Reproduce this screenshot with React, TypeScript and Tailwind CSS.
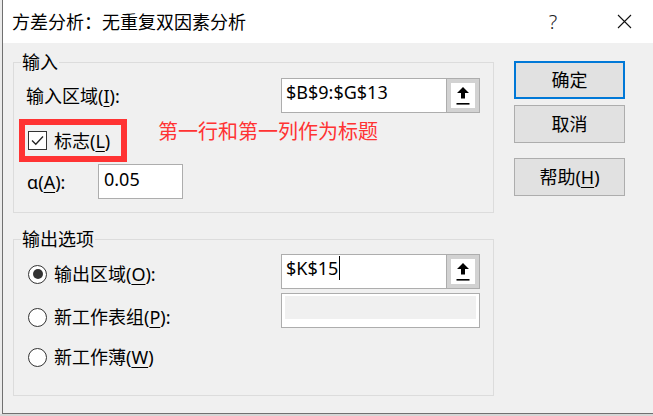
import type { ReactNode } from 'react';

// Excel "方差分析：无重复双因素分析" dialog, 150% Windows scaling look

function Key({ children }: { children: ReactNode }) {
  return <span className="underline decoration-1 underline-offset-[3px]">{children}</span>;
}

function UpArrow() {
  return (
    <svg width="14" height="20" viewBox="0 0 14 20" aria-hidden>
      <polygon points="7,1 13,7 9,7 9,12.5 5,12.5 5,7 1,7" fill="#000" />
      <rect x="0.5" y="17" width="13" height="1.6" fill="#000" />
    </svg>
  );
}

function RefInput({ value, caret }: { value: string; caret?: boolean }) {
  return (
    <div className="flex h-[35px] w-[199px]">
      <div className="flex flex-1 items-start border border-[#adadad] bg-white pl-[4px]">
        <span className="leading-[26px]">{value}</span>
        {caret && <span className="ml-[1px] mt-[1px] h-[24px] w-px bg-black" />}
      </div>
      <div className="w-[33px] border-y border-r border-[#adadad] bg-[#d2d2d2] p-[4px]">
        <div className="flex h-full items-center justify-center bg-white">
          <UpArrow />
        </div>
      </div>
    </div>
  );
}

function Checkbox() {
  return (
    <div className="h-[19px] w-[19px] shrink-0 border border-[#333] bg-white">
      <svg width="17" height="17" viewBox="0 0 17 17" aria-hidden>
        <polyline points="3,8.5 6.8,12.3 14,4.5" fill="none" stroke="#222" strokeWidth="1.3" />
      </svg>
    </div>
  );
}

function Radio({ checked }: { checked?: boolean }) {
  return (
    <div className="flex h-[19px] w-[19px] shrink-0 items-center justify-center rounded-full border border-[#333] bg-white">
      {checked && <div className="h-[10px] w-[10px] rounded-full bg-[#333]" />}
    </div>
  );
}

function DlgButton({ children, primary }: { children: ReactNode; primary?: boolean }) {
  return (
    <button
      className={
        primary
          ? 'flex h-[38px] w-[111px] items-center justify-center border-2 border-[#0078d7] bg-[#e1e1e1] leading-[24px]'
          : 'flex h-[38px] w-[111px] items-center justify-center border border-[#adadad] bg-[#e1e1e1] leading-[24px]'
      }
    >
      {children}
    </button>
  );
}

export default function App() {
  return (
    <div className="flex h-[416px] w-[653px] flex-col overflow-hidden bg-[#d6d6d6] font-['Noto_Sans','Noto_Sans_CJK_SC',sans-serif] text-[18px] text-black">
      <div className="flex h-[414px] shrink-0">
        <div className="w-[2px] shrink-0 bg-[#ebebeb]" />
        <div className="flex flex-1 flex-col border-b border-l border-[#707070] bg-[#f0f0f0]">
          {/* Title bar */}
          <div className="flex h-[43px] shrink-0 items-center bg-white pl-[9px]">
            <span className="leading-[24px]">方差分析：无重复双因素分析</span>
            <div className="ml-auto mr-[13px] flex w-[58px] justify-center text-[20px] font-light leading-[24px] text-[#222]">
              ?
            </div>
            <div className="flex w-[58px] justify-center">
              <svg width="15" height="15" viewBox="0 0 15 15" aria-hidden>
                <path d="M1 1L14 14M14 1L1 14" stroke="#111" strokeWidth="1.1" />
              </svg>
            </div>
          </div>

          {/* Body */}
          <div className="flex flex-1 pl-[10px] pt-[7px]">
            <div className="flex w-[481px] flex-col">
              {/* 输入 */}
              <fieldset className="border border-[#dcdcdc] pb-[13px]">
                <legend className="ml-[7px] px-[1px] leading-[24px]">输入</legend>
                <div className="mt-[4px] flex h-[35px] items-center">
                  <span className="ml-[12px] leading-[24px]">
                    输入区域(<Key>I</Key>):
                  </span>
                  <div className="ml-auto mr-[13px]">
                    <RefInput value="$B$9:$G$13" />
                  </div>
                </div>
                <div className="mt-[6px] flex items-start">
                  <div className="ml-[5px] flex h-[43px] w-[108px] items-center gap-[7px] border-[6px] border-[#ff3333] pl-[3px]">
                    <Checkbox />
                    <span className="leading-[24px]">
                      标志(<Key>L</Key>)
                    </span>
                  </div>
                  <span className="ml-[31px] mt-[1px] text-[20px] leading-[24px] text-[#ff3333]">
                    第一行和第一列作为标题
                  </span>
                </div>
                <div className="mt-[2px] flex h-[35px] items-center">
                  <span className="ml-[13px] w-[71px] leading-[24px]">
                    α(<Key>A</Key>):
                  </span>
                  <div className="h-[35px] w-[85px] border border-[#adadad] bg-white pl-[5px] pt-[1px]">
                    <span className="leading-[26px]">0.05</span>
                  </div>
                </div>
              </fieldset>

              {/* 输出选项 */}
              <fieldset className="mt-[14px] border border-[#dcdcdc] pb-[24px]">
                <legend className="ml-[7px] px-[1px] leading-[24px]">输出选项</legend>
                <div className="flex items-start">
                  <div className="flex flex-col pl-[14px] pt-[9px]">
                    <div className="flex h-[28px] items-center gap-[7px]">
                      <Radio checked />
                      <span className="leading-[24px]">
                        输出区域(<Key>O</Key>):
                      </span>
                    </div>
                    <div className="mt-[15px] flex h-[28px] items-center gap-[7px]">
                      <Radio />
                      <span className="leading-[24px]">
                        新工作表组(<Key>P</Key>):
                      </span>
                    </div>
                    <div className="mt-[12px] flex h-[28px] items-center gap-[7px]">
                      <Radio />
                      <span className="leading-[24px]">
                        新工作薄(<Key>W</Key>)
                      </span>
                    </div>
                  </div>
                  <div className="ml-auto mr-[13px] flex flex-col gap-[4px] pt-[3px]">
                    <RefInput value="$K$15" caret />
                    <div className="h-[35px] w-[199px] border border-[#adadad] bg-white px-[3px] pt-[2px]">
                      <div className="h-[23px] bg-[#f0f0f0]" />
                    </div>
                  </div>
                </div>
              </fieldset>
            </div>

            {/* Buttons */}
            <div className="ml-[20px] flex flex-col pt-[11px]">
              <DlgButton primary>确定</DlgButton>
              <div className="mt-[6px]">
                <DlgButton>取消</DlgButton>
              </div>
              <div className="mt-[15px]">
                <DlgButton>
                  帮助(<Key>H</Key>)
                </DlgButton>
              </div>
            </div>
          </div>
        </div>
      </div>
    </div>
  );
}
